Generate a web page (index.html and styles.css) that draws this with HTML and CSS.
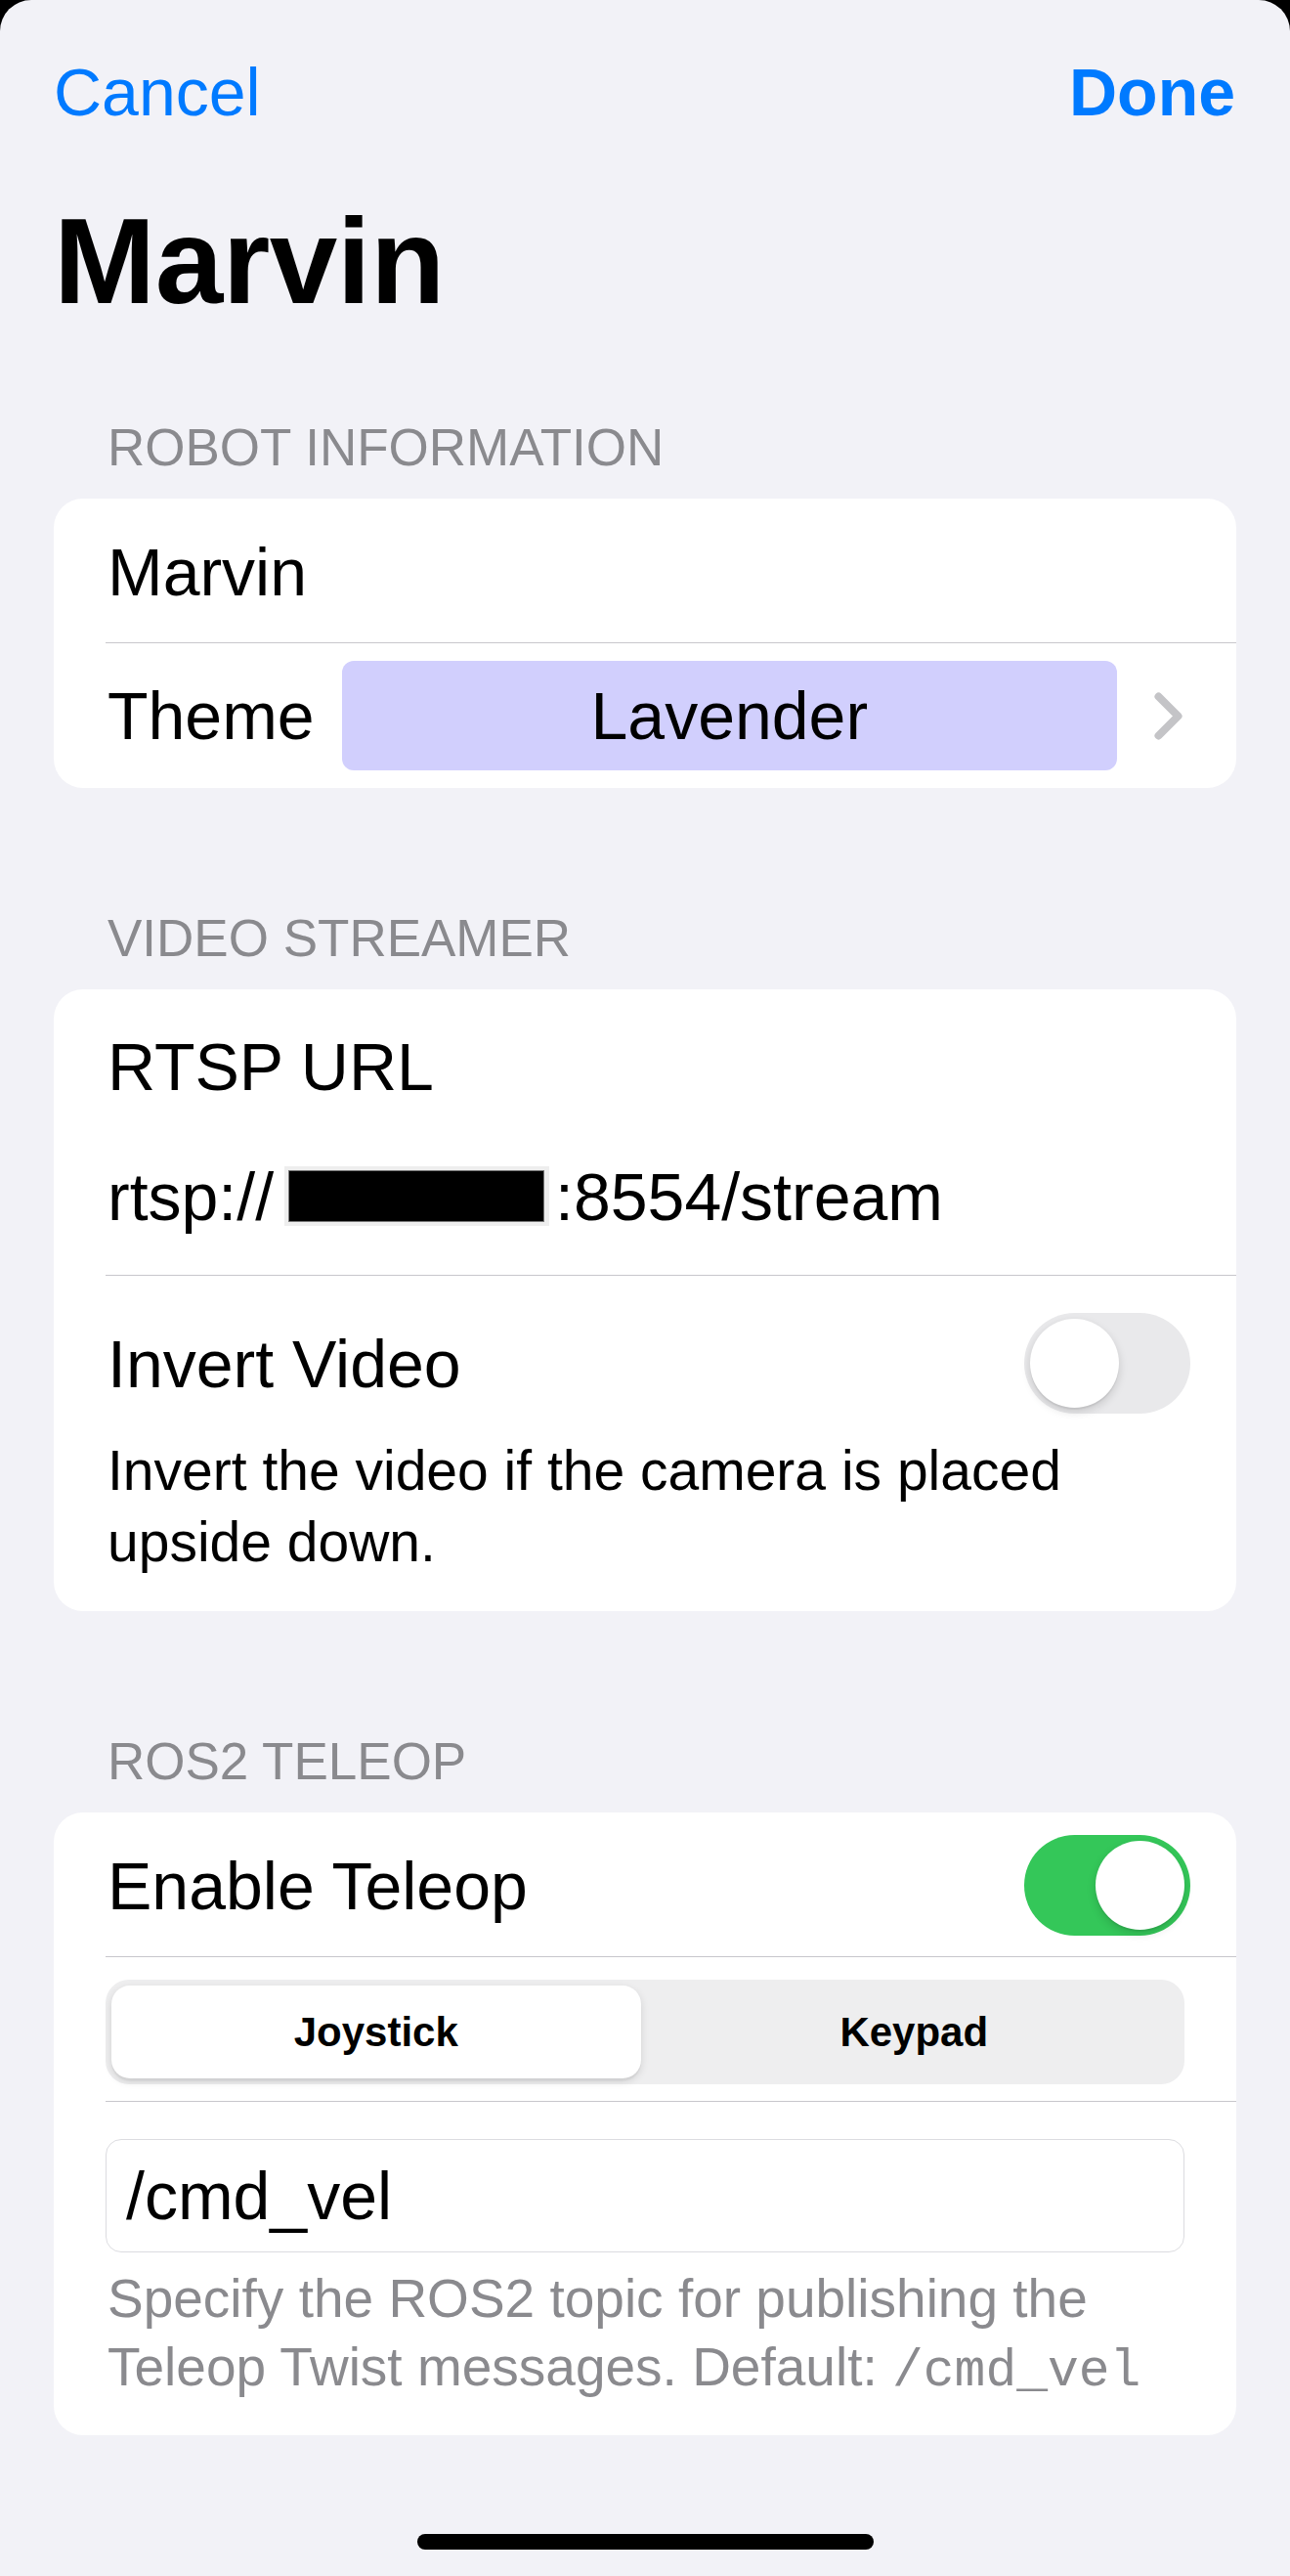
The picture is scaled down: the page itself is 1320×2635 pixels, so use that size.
FILE: index.html
```html
<!DOCTYPE html>
<html lang="en">
<head>
<meta charset="utf-8">
<title>Marvin</title>
<link rel="stylesheet" href="styles.css">
</head>
<body>
<div class="sheet">
  <div class="nav">
    <span class="nav-btn">Cancel</span>
    <span class="nav-btn done">Done</span>
  </div>
  <h1 class="title">Marvin</h1>

  <section class="section first">
    <div class="section-header">ROBOT INFORMATION</div>
    <div class="card">
      <div class="row row-name">Marvin</div>
      <div class="sep"></div>
      <div class="row row-theme">
        <span class="label">Theme</span>
        <span class="theme-chip">Lavender</span>
        <svg class="chevron" width="29" height="49" viewBox="0 0 29 49"><path d="M4.5 4.5 L24.5 24.5 L4.5 44.5" fill="none" stroke="#c4c4c7" stroke-width="8" stroke-linecap="round" stroke-linejoin="round"/></svg>
      </div>
    </div>
  </section>

  <section class="section">
    <div class="section-header">VIDEO STREAMER</div>
    <div class="card">
      <div class="url-block">
        <div class="url-line">RTSP URL</div>
        <div class="url-line">rtsp://<span class="redact"><span class="redact-inner"></span></span>:8554/stream</div>
      </div>
      <div class="sep"></div>
      <div class="toggle-cell">
        <div class="toggle-row">
          <span class="label">Invert Video</span>
          <span class="switch"><span class="knob"></span></span>
        </div>
        <p class="desc">Invert the video if the camera is placed upside down.</p>
      </div>
    </div>
  </section>

  <section class="section">
    <div class="section-header">ROS2 TELEOP</div>
    <div class="card">
      <div class="toggle-row teleop-row">
        <span class="label">Enable Teleop</span>
        <span class="switch on"><span class="knob"></span></span>
      </div>
      <div class="sep"></div>
      <div class="seg-cell">
        <div class="segmented">
          <span class="segment selected">Joystick</span>
          <span class="segment">Keypad</span>
        </div>
      </div>
      <div class="sep"></div>
      <div class="field-cell">
        <div class="textfield">/cmd_vel</div>
        <p class="footer">Specify the ROS2 topic for publishing the Teleop Twist messages. Default: <span class="mono">/cmd_vel</span></p>
      </div>
    </div>
  </section>

  <div class="home-indicator"></div>
</div>
</body>
</html>
```

FILE: styles.css
```css
* {
  box-sizing: border-box;
  margin: 0;
  padding: 0;
}

html,
body {
  background: #000;
}

body {
  margin: 0;
  font-family: "Liberation Sans", Arial, sans-serif;
  color: #000;
}

.sheet {
  background: #f2f2f7;
  border-radius: 32px 32px 0 0;
  height: 2635px;
  padding: 0 55px;
  overflow: hidden;
}

.nav {
  display: flex;
  justify-content: space-between;
  padding-top: 54px;
  height: 134px;
  font-size: 68px;
  line-height: 80px;
  color: #007aff;
}

.nav .done {
  font-weight: bold;
  margin-right: 1px;
}

.title {
  margin-top: 63px;
  font-size: 125px;
  line-height: 140px;
  font-weight: bold;
  letter-spacing: -0.5px;
}

.section {
  margin-top: 122px;
}

.section.first {
  margin-top: 89px;
}

.section-header {
  font-size: 53px;
  line-height: 64px;
  color: #8a8a8e;
  padding-left: 55px;
  margin-bottom: 20px;
}

.card {
  background: #fff;
  border-radius: 30px;
  overflow: hidden;
}

.sep {
  height: 1px;
  background: #c8c7cc;
  margin-left: 53px;
}

.row {
  display: flex;
  align-items: center;
  padding: 0 55px;
  font-size: 68px;
  line-height: 80px;
}

.row-name {
  height: 147px;
  padding-top: 3px;
}

.row-theme {
  height: 148px;
}

.theme-chip {
  flex: 1;
  margin: 0 38px 0 28px;
  height: 112px;
  border-radius: 12px;
  background: #d1cffd;
  display: flex;
  align-items: center;
  justify-content: center;
}

.chevron {
  flex: none;
  display: block;
}

/* Video streamer */
.url-block {
  padding: 13px 55px;
  font-size: 68px;
  line-height: 133px;
}

.redact {
  display: inline-block;
  width: 271px;
  height: 61px;
  margin: 0 6px 0 11px;
  vertical-align: -6px;
  background: #eeeeee;
  padding: 4px 5px 4px 4px;
}

.redact-inner {
  display: block;
  height: 100%;
  background: #000;
  border: 1px solid #777;
}

.toggle-cell {
  padding: 38px 55px 34px;
}

.toggle-row {
  display: flex;
  align-items: center;
  justify-content: space-between;
  height: 103px;
  font-size: 68px;
  line-height: 80px;
}

.switch {
  position: relative;
  flex: none;
  width: 170px;
  height: 103px;
  border-radius: 52px;
  background: #e9e9eb;
  margin-right: -8px;
}

.switch .knob {
  position: absolute;
  top: 6px;
  left: 6px;
  width: 91px;
  height: 91px;
  border-radius: 50%;
  background: #fff;
  box-shadow: 0 4px 10px rgba(0, 0, 0, 0.15), 0 2px 1px rgba(0, 0, 0, 0.06);
}

.switch.on {
  background: #34c759;
}

.switch.on .knob {
  left: 73px;
}

.desc {
  margin-top: 22px;
  font-size: 57px;
  line-height: 73px;
}

/* Teleop */
.teleop-row {
  box-sizing: content-box;
  padding: 23px 55px 21px;
}

.seg-cell {
  padding: 23px 53px 17px;
}

.segmented {
  display: flex;
  height: 107px;
  padding: 6px;
  border-radius: 24px;
  background: #eeeeef;
}

.segment {
  flex: 1;
  display: flex;
  align-items: center;
  justify-content: center;
  font-size: 42px;
  font-weight: bold;
  border-radius: 19px;
}

.segment.selected {
  background: #fff;
  box-shadow: 0 3px 8px rgba(0, 0, 0, 0.12), 0 3px 1px rgba(0, 0, 0, 0.04);
  margin-right: 9px;
}

.field-cell {
  padding: 38px 53px 35px;
}

.textfield {
  height: 116px;
  display: flex;
  align-items: center;
  padding: 0 20px;
  border: 1.5px solid #dcdce0;
  border-radius: 16px;
  font-size: 68px;
  line-height: 80px;
}

.footer {
  margin-top: 12px;
  padding: 0 2px;
  font-size: 55px;
  line-height: 70px;
  color: #8a8a8e;
}

.footer .mono {
  font-family: "Liberation Mono", "DejaVu Sans Mono", monospace;
  font-size: 53px;
  line-height: 40px;
}

.home-indicator {
  width: 467px;
  height: 16px;
  margin: 101px auto 0;
  border-radius: 8px;
  background: #000;
}
```
